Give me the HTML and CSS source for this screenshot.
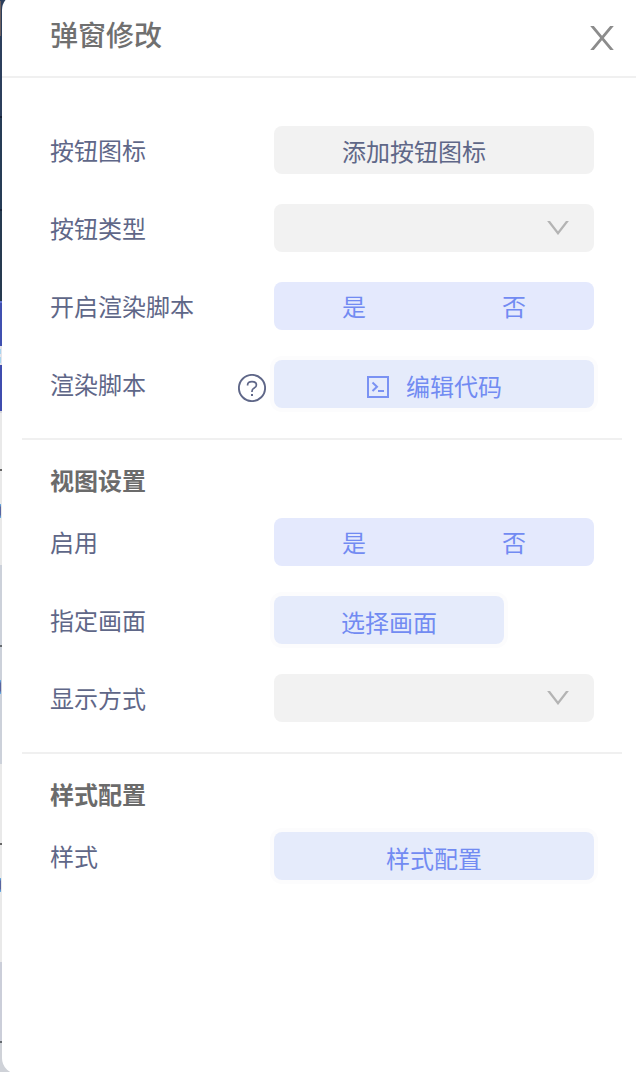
FILE: index.html
```html
<!DOCTYPE html>
<html lang="zh-CN">
<head>
<meta charset="utf-8">
<title>弹窗修改</title>
<link rel="stylesheet" href="styles.css">
</head>
<body>
<div class="backdrop">
<main class="panel">
  <header class="header">
    <h1 class="title">弹窗修改</h1>
    <svg class="close" width="24" height="24" viewBox="0 0 24 24"><path d="M1.2 -1L22.8 25M22.8 -1L1.2 25"/></svg>
  </header>
  <section class="section first">
    <div class="row"><span class="label">按钮图标</span><button class="field add"><span>添加按钮图标</span></button></div>
    <div class="row"><span class="label">按钮类型</span><div class="field select"><svg class="arrow" width="22" height="14" viewBox="0 0 22 14"><path d="M.8 -1L11 12.2L21.2 -1"/></svg></div></div>
    <div class="row"><span class="label">开启渲染脚本</span><div class="field toggle"><span>是</span><span>否</span></div></div>
    <div class="row"><span class="label">渲染脚本</span>
      <svg class="help" width="28" height="28" viewBox="0 0 28 28"><circle cx="14" cy="14" r="13.1"/><path class="mark" d="M9.6 11.6V10.8Q9.8 7.6 14 7.6Q18.4 7.6 18.4 11Q18.4 13 16.2 14.1Q14 15.2 14 17.3V18"/><path class="dot" d="M13 20h2v2h-2z"/></svg>
      <button class="field action"><svg class="code" width="22" height="22" viewBox="0 0 22 22"><path d="M1 1H21V21H1ZM5.5 6.5L10 10.7L5.5 15M11 15H17"/></svg><span>编辑代码</span></button></div>
  </section>
  <section class="section">
    <h2 class="heading">视图设置</h2>
    <div class="row"><span class="label">启用</span><div class="field toggle"><span>是</span><span>否</span></div></div>
    <div class="row"><span class="label">指定画面</span><button class="field action short"><span>选择画面</span></button></div>
    <div class="row"><span class="label">显示方式</span><div class="field select"><svg class="arrow" width="22" height="14" viewBox="0 0 22 14"><path d="M.8 -1L11 12.2L21.2 -1"/></svg></div></div>
  </section>
  <section class="section">
    <h2 class="heading">样式配置</h2>
    <div class="row"><span class="label">样式</span><button class="field action"><span>样式配置</span></button></div>
  </section>
</main>
</div>
</body>
</html>
```
FILE: styles.css
```css
* { box-sizing: border-box; }
body {
  margin: 0;
  height: 1072px;
  overflow: hidden;
  font-family: "Noto Sans CJK SC", sans-serif;
}
.backdrop {
  height: 1072px;
  overflow: hidden;
  padding-left: 2px;
  background:
    radial-gradient(ellipse 1px 7px at 0.5px 511px, #5864a0 50%, #65b5ec 99%, transparent),
    radial-gradient(ellipse 1px 7px at 0.5px 687px, #5864a0 50%, #65b5ec 99%, transparent),
    radial-gradient(ellipse 1px 7px at 0.5px 885px, #5864a0 50%, #65b5ec 99%, transparent),
    linear-gradient(#a8d5f0, #a8d5f0) 0 349px / 1px 5px no-repeat,
    linear-gradient(#a8d5f0, #a8d5f0) 0 357px / 1px 6px no-repeat,
    linear-gradient(#6d6060, #6d6060) 0 1px / 1px 35px no-repeat,
    linear-gradient(#2c3f5c 0 116px, #17233a 116px 118px, #263c56 118px 209px, #17233a 209px 211px, #263a50 211px 301px, #6676d4 301px 303px, #4050b0 303px 346px, #e4e4ea 346px 365px, #3f4cae 365px 411px, #d5d5dc 411px 413px, #e9e9e9 413px 469px, #666 469px 471px, #e9e9e9 471px 565px, #ccd1da 565px 645px, #666b70 645px 647px, #ccd1da 647px 764px, #e9e9e9 764px 843px, #666 843px 845px, #e9e9e9 845px 962px, #cbced9 962px 1041px, #666b70 1041px 1043px, #cfd2d8 1043px);
}
.panel {
  height: 1080px;
  margin-top: -6px;
  padding-top: 6px;
  background: #fff;
  border-radius: 16px 0 0 16px;
}
.header {
  display: flex;
  justify-content: space-between;
  align-items: center;
  height: 78px;
  padding: 0 22px 0 48px;
  border-bottom: 2px solid #f0f0f0;
}
.title {
  margin: 0;
  padding-bottom: 8px;
  font-size: 28px;
  font-weight: 500;
  line-height: 42px;
  color: #707070;
}
.section {
  display: flex;
  flex-direction: column;
  gap: 30px;
  margin: 0 14px 0 20px;
  padding: 0 28px 30px;
  border-bottom: 2px solid #f0f0f0;
}
.section.first { padding-top: 48px; }
.section:last-child { border-bottom: 0; }
.heading {
  height: 48px;
  margin: 0;
  padding-top: 22px;
  font-size: 24px;
  font-weight: 700;
  line-height: 36px;
  color: #6b6b6b;
}
.row {
  display: flex;
  align-items: center;
  height: 48px;
}
.label {
  font-size: 24px;
  line-height: 48px;
  color: #5f6788;
}
.field {
  display: flex;
  align-items: center;
  justify-content: center;
  width: 320px;
  height: 48px;
  margin: 0 0 0 auto;
  padding: 0;
  border: 0;
  border-radius: 8px;
  font: 400 24px/44px "Noto Sans CJK SC", sans-serif;
}
.add {
  padding: 2px 40px 0 0;
  background: #f2f2f2;
  color: #5f6788;
}
.select {
  justify-content: flex-end;
  padding-right: 25px;
  background: #f2f2f2;
}
.toggle {
  background: #e4e9fd;
  color: #728bf2;
}
.toggle span {
  width: 50%;
  text-align: center;
}
.action {
  padding-top: 4px;
  background: #e5ebfb;
  color: #728bf2;
  box-shadow: 0 0 0 4px #fcfcfd;
}
.action.short {
  width: 230px;
  margin-right: 90px;
}
svg { fill: none; }
.close { stroke: #8c8c8c; stroke-width: 2.8; }
.arrow { stroke: #b4b4b4; stroke-width: 2.3; }
.help {
  margin: 8px 8px 0 auto;
  stroke: #5f6788;
  stroke-width: 1.9;
}
.help .mark { stroke-width: 1.7; }
.help + .field { margin-left: 0; }
.help .dot { fill: #5f6788; stroke: none; }
.code {
  margin: 2px 17px 0 1px;
  stroke: #7a92f3;
  stroke-width: 2;
}
```
